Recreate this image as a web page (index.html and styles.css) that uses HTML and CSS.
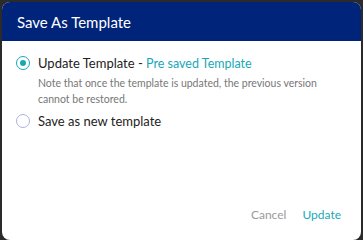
FILE: index.html
```html
<!DOCTYPE html>
<html lang="en">
<head>
  <meta charset="UTF-8">
  <title>Save As Template</title>
  <link rel="stylesheet" href="styles.css">
</head>
<body>

  <div class="dialog">
    <div class="dialog-header">Save As Template</div>

    <div class="dialog-body">
      <label class="option">
        <span class="radio checked"></span>
        <span class="option-text">
          Update Template - <span class="accent">Pre saved Template</span>
        </span>
      </label>
      <p class="note">Note that once the template is updated, the previous version cannot be restored.</p>

      <label class="option">
        <span class="radio"></span>
        <span class="option-text">Save as new template</span>
      </label>
    </div>

    <div class="dialog-footer">
      <button class="btn cancel">Cancel</button>
      <button class="btn primary">Update</button>
    </div>
  </div>

</body>
</html>
```

FILE: styles.css
```css
html, body {
  height: 100%;
}
body {
  margin: 0;
  padding: 2px 2px 0 2px;
  box-sizing: border-box;
  background: #2b2b2b;
  font-family: "Lato", "Open Sans", sans-serif;
}
.dialog {
  background: #fff;
  border-radius: 8px;
  height: 100%;
  display: flex;
  flex-direction: column;
  overflow: hidden;
}
.dialog-header {
  background: #00247a;
  color: #fff;
  font-size: 15px;
  height: 39px;
  padding: 0 15px;
  display: flex;
  align-items: center;
}
.dialog-body {
  padding: 14px 14px 0 14px;
  flex: 1;
}
.option {
  display: flex;
  align-items: center;
  gap: 8px;
  font-size: 13px;
  color: #222;
}
.radio {
  width: 14px;
  height: 14px;
  border-radius: 50%;
  border: 1px solid #a9b5de;
  box-sizing: border-box;
  position: relative;
}
.radio.checked {
  border: 1.5px solid #17a8b8;
}
.radio.checked::after {
  content: "";
  position: absolute;
  left: 2.5px;
  top: 2.5px;
  width: 6px;
  height: 6px;
  border-radius: 50%;
  background: #17a8b8;
}
.accent {
  color: #17a8b8;
  font-size: 12.5px;
}
.note {
  margin: 4px 0 6px 22px;
  font-size: 10.5px;
  line-height: 16px;
  color: #777;
}
.dialog-footer {
  display: flex;
  justify-content: flex-end;
  gap: 16px;
  padding: 0 20px 18px 0;
}
.btn {
  background: none;
  border: none;
  padding: 0;
  font-family: inherit;
  font-size: 12px;
}
.cancel {
  color: #9a9a9a;
}
.primary {
  color: #17a8b8;
}
```
